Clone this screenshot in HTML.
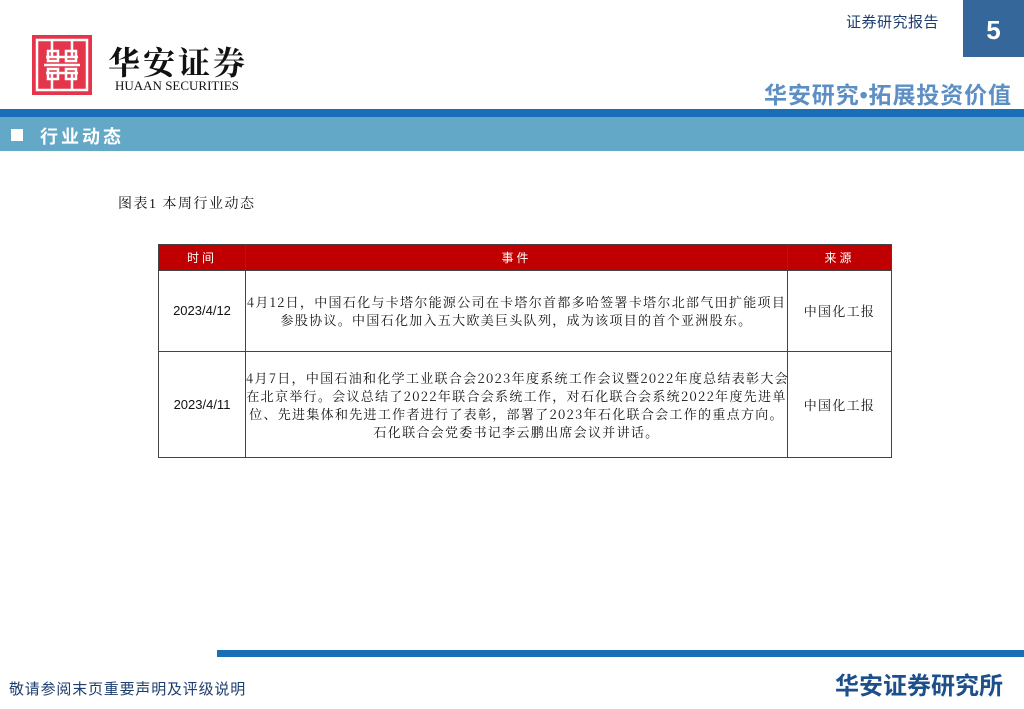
<!DOCTYPE html>
<html><head><meta charset="utf-8"><style>
body{margin:0;width:1024px;height:709px;position:relative;background:#fff;font-family:"Liberation Sans","Noto Sans CJK SC",sans-serif;overflow:hidden}
.a{position:absolute}
table{border-collapse:collapse;position:absolute;left:158px;top:244px;width:734px;font-size:13px;color:#111;table-layout:fixed}
td{border:1px solid #444;text-align:center;padding:0;line-height:18px}
th{background:#c00000;color:#fff;font-weight:normal;height:25px;border:1px solid #444;font-size:12px;letter-spacing:3px;padding:0}
.s{font-family:'Noto Serif CJK SC',serif;letter-spacing:1.3px;white-space:nowrap}
</style></head><body>
<div class="a" style="left:32px;top:35px;width:60px;height:60px;background:#e4354a"></div>
<svg class="a" style="left:32px;top:35px" width="60" height="60"><g fill="none" stroke="#fff" stroke-width="2.5"><rect x="5" y="5" width="50" height="50"/><path d="M20 5V22M40 5V22M20 38V55M40 38V55M12 30H48M14 22H46M14 38H46"/><rect x="16" y="16" width="10" height="10"/><rect x="34" y="16" width="10" height="10"/><rect x="16" y="34" width="10" height="10"/><rect x="34" y="34" width="10" height="10"/></g></svg>
<div class="a" style="left:108px;top:38px;font-family:'Noto Serif CJK SC',serif;font-size:32px;font-weight:bold;letter-spacing:3px;color:#111">华安证券</div>
<div class="a" style="left:115px;top:78px;font-family:'Liberation Serif',serif;font-size:13px;color:#111">HUAAN SECURITIES</div>
<div class="a" style="left:846px;top:11px;font-size:15px;letter-spacing:0.5px;color:#1d3d6e">证券研究报告</div>
<div class="a" style="left:963px;top:0;width:61px;height:57px;background:#35679a;color:#fff;font-size:26px;font-weight:bold;text-align:center;line-height:60px">5</div>
<div class="a" style="left:764px;top:82px;font-size:23px;line-height:26px;font-weight:bold;color:#5e8fc4;letter-spacing:0.9px;white-space:nowrap">华安研究•拓展投资价值</div>
<div class="a" style="left:0;top:109px;width:1024px;height:8px;background:#1a6eb5"></div>
<div class="a" style="left:0;top:117px;width:1024px;height:34px;background:#64a8c8"></div>
<div class="a" style="left:11px;top:129px;width:12px;height:12px;background:#fff"></div>
<div class="a" style="left:40px;top:123px;font-size:18px;color:#fff;letter-spacing:3px;font-weight:bold">行业动态</div>
<div class="a" style="left:118px;top:193px;font-size:14px;letter-spacing:1.5px;color:#111;font-family:'Liberation Serif','Noto Serif CJK SC',serif">图表1 本周行业动态</div>
<table>
<colgroup><col style="width:87px"><col><col style="width:104px"></colgroup>
<tr><th>时间</th><th>事件</th><th>来源</th></tr>
<tr style="height:81px"><td>2023/4/12</td><td class="s">4月12日，中国石化与卡塔尔能源公司在卡塔尔首都多哈签署卡塔尔北部气田扩能项目<br>参股协议。中国石化加入五大欧美巨头队列，成为该项目的首个亚洲股东。</td><td class="s">中国化工报</td></tr>
<tr style="height:106px"><td>2023/4/11</td><td class="s">4月7日，中国石油和化学工业联合会2023年度系统工作会议暨2022年度总结表彰大会<br>在北京举行。会议总结了2022年联合会系统工作，对石化联合会系统2022年度先进单<br>位、先进集体和先进工作者进行了表彰，部署了2023年石化联合会工作的重点方向。<br>石化联合会党委书记李云鹏出席会议并讲话。</td><td class="s">中国化工报</td></tr>
</table>
<div class="a" style="left:217px;top:650px;width:807px;height:7px;background:#1a6eb5"></div>
<div class="a" style="left:9px;top:678px;font-size:15px;letter-spacing:0.8px;color:#1d3d6e">敬请参阅末页重要声明及评级说明</div>
<div class="a" style="left:835px;top:666px;font-size:24px;font-weight:bold;color:#1d4f8a">华安证券研究所</div>
</body></html>
